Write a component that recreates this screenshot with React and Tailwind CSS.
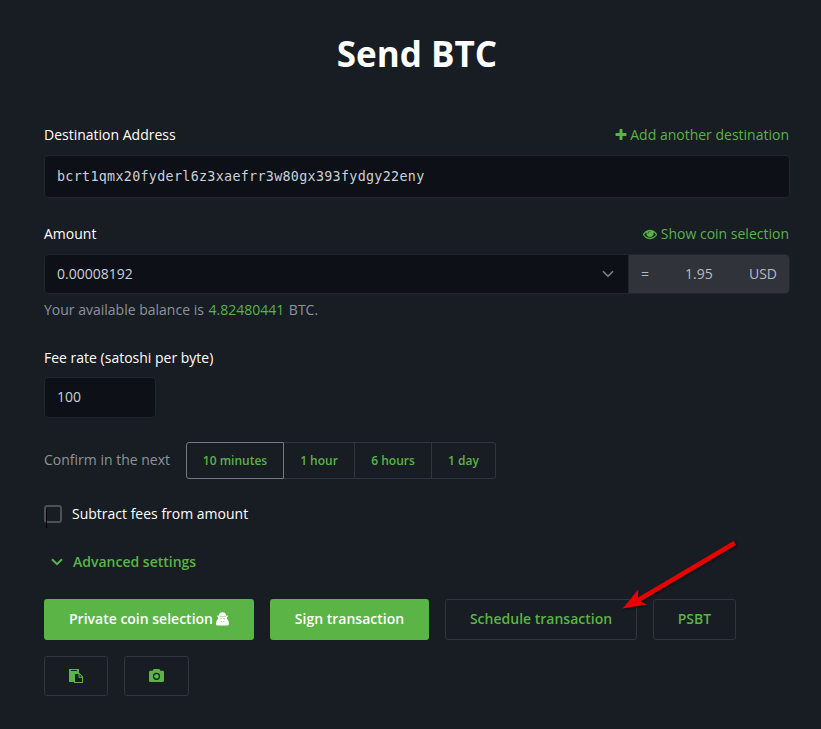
import React from "react";

const Plus = () => (
  <svg viewBox="0 0 1792 1792" className="h-[14px] w-[14px]" fill="currentColor">
    <path d="M1600 736v192q0 40-28 68t-68 28h-416v416q0 40-28 68t-68 28h-192q-40 0-68-28t-28-68v-416h-416q-40 0-68-28t-28-68v-192q0-40 28-68t68-28h416v-416q0-40 28-68t68-28h192q40 0 68 28t28 68v416h416q40 0 68 28t28 68z" />
  </svg>
);

const Eye = () => (
  <svg viewBox="0 0 1792 1792" className="h-[14px] w-[14px]" fill="currentColor" stroke="currentColor" strokeWidth="40">
    <path d="M1664 960q-152-236-381-353 61 104 61 225 0 185-131.5 316.5t-316.5 131.5-316.5-131.5-131.5-316.5q0-121 61-225-229 117-381 353 133 205 333.5 326.5t434.5 121.5 434.5-121.5 333.5-326.5zm-720-384q0-20-14-34t-34-14q-125 0-214.5 89.5t-89.5 214.5q0 20 14 34t34 14 34-14 14-34q0-86 61-147t147-61q20 0 34-14t14-34zm848 384q0 34-20 69-140 230-376.5 368.5t-499.5 138.5-499.5-139-376.5-368q-20-35-20-69t20-69q140-229 376.5-368t499.5-139 499.5 139 376.5 368q20 35 20 69z" />
  </svg>
);

const Chevron = ({ className }) => (
  <svg viewBox="0 0 12 8" className={className} fill="none" stroke="currentColor">
    <path d="M1 1.2 6 6.2 11 1.2" />
  </svg>
);

const Secret = () => (
  <svg viewBox="0 0 12 14" className="h-[14px] w-[13px]" preserveAspectRatio="none" fill="currentColor">
    <path d="M3 2Q3.2.2 6 .2T9 2L9.3 3.4H10.8V5H10.2V7L11.4 8.4 12 11.8Q12 13.4 10.8 13.4H1.2Q0 13.4 0 11.8L.6 8.4 1.8 7V5H1.2V3.4H2.7Z" />
    <path fill="#5ab446" fillOpacity=".6" d="M3.2 4.3h5.6v.7H3.2zM3.8 6.2h1.4v1H3.8zM6.8 6.2h1.4v1H6.8zM4.4 9h1v1h-1zM6.6 9h1v1h-1z" />
  </svg>
);

const Paste = () => (
  <svg viewBox="0 0 14 14" className="h-[14px] w-[14px]" fill="currentColor">
    <path fillRule="evenodd" d="M0 0H10V4H5V13H0ZM2 1V2H8V1Z" />
    <path fillRule="evenodd" d="M5 4H10.5L14 7.5V14H5ZM6 5V13H13V8.7H9.5V5ZM10.6 5.5V7.7H12.8Z" />
  </svg>
);

const Camera = () => (
  <svg viewBox="0 0 15 13" className="h-[13px] w-[15px]" fill="currentColor">
    <path fillRule="evenodd" d="M4 1Q4.2 0 5.2 0H9.8Q10.8 0 11 1L11.3 1.7H13.6Q15 1.7 15 3V11.8Q15 13 13.6 13H1.4Q0 13 0 11.8V3Q0 1.7 1.4 1.7H3.7ZM7.5 3.7a3.6 3.6 0 1 0 0 7.2 3.6 3.6 0 1 0 0-7.2Z" />
    <circle cx="7.5" cy="7.3" r="2.4" />
  </svg>
);

const Label = ({ children }) => <label className="text-white">{children}</label>;

const outline = "flex h-full items-center justify-center rounded-[3px] border border-[#30353f] font-semibold";

export default function App() {
  return (
    <main className="h-[729px] w-[821px] overflow-hidden bg-[#181c23] pl-11 pr-[31px] pt-[30px] font-['Open_Sans','Noto_Sans',sans-serif] text-[14px] leading-[20px] text-[#c9d1d9]">
      <h1 className="h-12 text-center text-[35px] leading-[48px] font-bold text-white">Send BTC</h1>

      <div className="mt-[47px] flex justify-between">
        <Label>Destination Address</Label>
        <a className="mr-px flex items-center gap-[2px] text-[#5ab446]"><Plus />Add another destination</a>
      </div>
      <div className="mt-[10px] flex h-[43px] items-center rounded-[4px] border border-[#21252d] bg-[#0d1017] px-3 font-['DejaVu_Sans_Mono',monospace] text-[13.4px] tracking-[0.29px]">
        bcrt1qmx20fyderl6z3xaefrr3w80gx393fydgy22eny
      </div>

      <div className="mt-[26px] flex justify-between">
        <Label>Amount</Label>
        <a className="mr-px flex items-center gap-[4px] text-[#5ab446]"><Eye />Show coin selection</a>
      </div>
      <div className="mt-[10px] flex h-10 overflow-hidden rounded-[4px] border border-[#21252d] bg-[#0d1017]">
        <div className="flex w-[583px] items-center justify-between pl-3 pr-[14px]">
          <span>0.00008192</span>
          <Chevron className="h-2 w-3 stroke-[1.5] text-[#81868d]" />
        </div>
        <div className="flex flex-1 items-center border-l border-[#21252d] bg-[#30343a] pr-3 pl-3 text-[#b4bac2]">
          <span className="w-11">=</span>
          <span className="flex-1">1.95</span>
          <span>USD</span>
        </div>
      </div>
      <p className="mt-[6px] text-[#8b949e]">
        Your available balance is <span className="mr-px ml-px text-[#5ab446]">4.82480441</span> BTC.
      </p>

      <div className="mt-7 flex"><Label>Fee rate (satoshi per byte)</Label></div>
      <div className="mt-[9px] flex h-[41px] w-28 items-center rounded-[4px] border border-[#21252d] bg-[#0d1017] px-3 pb-[2px]">100</div>

      <div className="mt-6 flex h-[37px] items-center text-[#8b949e]">
        <span className="w-[142px] pb-[2px]">Confirm in the next</span>
        <div className="flex h-full text-[12px] font-semibold text-[#5ab446]">
          <span className="flex w-[98px] items-center justify-center rounded-l-[3px] border border-[#737884]">10 minutes</span>
          <span className="flex w-[71px] items-center justify-center border-y border-r border-[#30353f]">1 hour</span>
          <span className="flex w-[77px] items-center justify-center border-y border-r border-[#30353f]">6 hours</span>
          <span className="flex w-16 items-center justify-center rounded-r-[3px] border-y border-r border-[#30353f]">1 day</span>
        </div>
      </div>

      <label className="mt-[25px] flex h-5 items-center text-white">
        <span className="relative mr-[10px] h-[18px] w-[18px] rounded-[3px] border-2 border-[#4b505a]">
          <i className="absolute top-[2px] left-0 h-[19px] w-px bg-black" />
        </span>
        Subtract fees from amount
      </label>

      <div className="mt-7 flex h-5 items-center pl-[7px] font-semibold text-[#5ab446]">
        <Chevron className="mr-[10px] h-2 w-3 stroke-2" />Advanced settings
      </div>

      <div className="mt-[27px] flex h-[41px] gap-4 text-[#5ab446]">
        <button className="flex w-[210px] items-center justify-center gap-[3px] rounded-[3px] bg-[#5ab446] pb-[2px] font-semibold text-white">
          Private coin selection<Secret />
        </button>
        <button className="w-[159px] rounded-[3px] bg-[#5ab446] pb-[2px] font-semibold text-white">Sign transaction</button>
        <div className="relative w-48">
          <button className={outline + " w-full pb-[2px]"}>Schedule transaction</button>
          <svg viewBox="0 0 120 76" className="absolute top-[-60px] left-[174px] z-10 h-[76px] w-[120px] drop-shadow-[1px_1px_1px_rgba(0,0,0,0.6)]">
            <path fill="#e60000" d="M3.5 69.6 19.3 50.5 19 58.5 114.5 2 117 6 21.5 62.4 28 65.5Z" />
          </svg>
        </div>
        <button className={outline + " w-[83px] pb-[2px]"}>PSBT</button>
      </div>
      <div className="mt-4 flex h-10 gap-4 text-[#5ab446]">
        <button className={outline + " w-16"}><Paste /></button>
        <button className={outline + " w-[65px] pb-px"}><Camera /></button>
      </div>
    </main>
  );
}
